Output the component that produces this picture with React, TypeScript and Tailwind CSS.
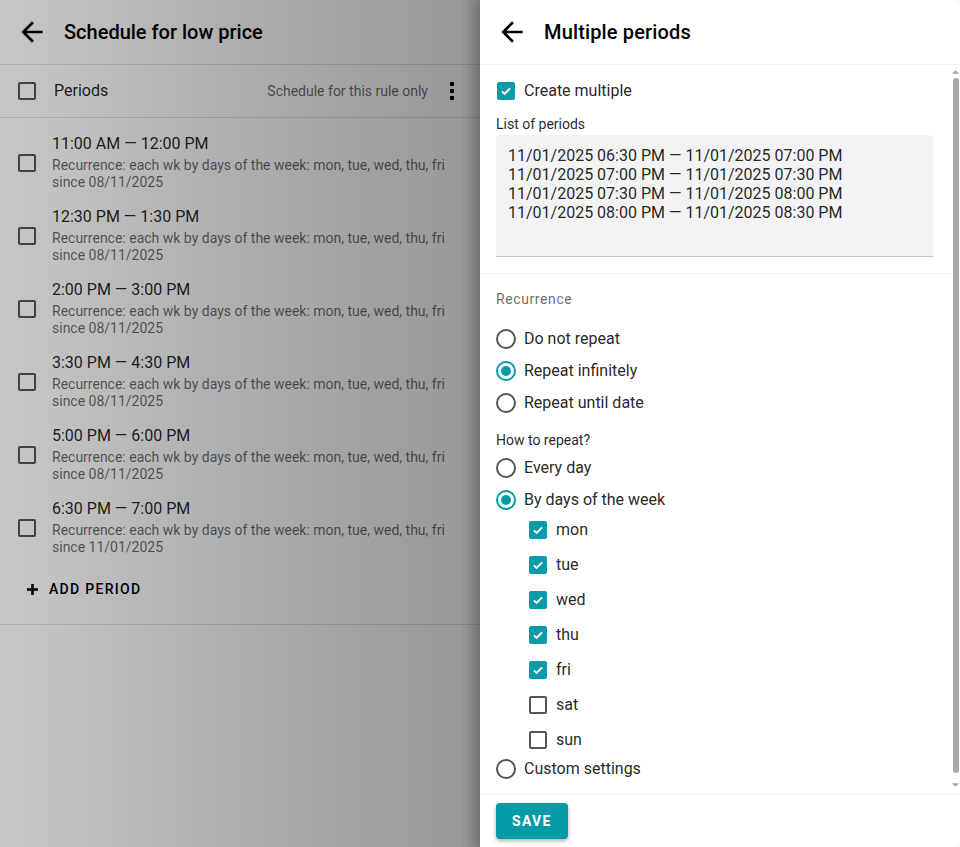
import React from "react";

const periods = [
  { time: "11:00 AM — 12:00 PM", since: "08/11/2025" },
  { time: "12:30 PM — 1:30 PM", since: "08/11/2025" },
  { time: "2:00 PM — 3:00 PM", since: "08/11/2025" },
  { time: "3:30 PM — 4:30 PM", since: "08/11/2025" },
  { time: "5:00 PM — 6:00 PM", since: "08/11/2025" },
  { time: "6:30 PM — 7:00 PM", since: "11/01/2025" },
];

const listLines = [
  "11/01/2025 06:30 PM — 11/01/2025 07:00 PM",
  "11/01/2025 07:00 PM — 11/01/2025 07:30 PM",
  "11/01/2025 07:30 PM — 11/01/2025 08:00 PM",
  "11/01/2025 08:00 PM — 11/01/2025 08:30 PM",
];

const days = [
  { d: "mon", on: true },
  { d: "tue", on: true },
  { d: "wed", on: true },
  { d: "thu", on: true },
  { d: "fri", on: true },
  { d: "sat", on: false },
  { d: "sun", on: false },
];

function BackArrow() {
  return (
    <svg viewBox="0 0 24 24" className="w-[32px] h-[32px] shrink-0" fill="#000">
      <path d="M20 11H7.83l5.59-5.59L12 4l-8 8 8 8 1.41-1.41L7.83 13H20v-2z" />
    </svg>
  );
}

function Check({ on }: { on: boolean }) {
  if (on) {
    return (
      <span className="w-[18px] h-[18px] rounded-[2px] bg-[#079ba7] flex items-center justify-center shrink-0">
        <svg viewBox="0 0 24 24" className="w-[14px] h-[14px]" fill="none" stroke="#fff" strokeWidth="3.2">
          <path d="M5 12.5l4.5 4.5L19 7.5" />
        </svg>
      </span>
    );
  }
  return <span className="block w-[18px] h-[18px] rounded-[2px] border-2 border-[#555555] shrink-0" />;
}

function Radio({ on }: { on: boolean }) {
  return (
    <span
      className={
        on
          ? "w-[20px] h-[20px] rounded-full border-2 border-[#079ba7] flex items-center justify-center shrink-0"
          : "w-[20px] h-[20px] rounded-full border-2 border-[#555555] shrink-0"
      }
    >
      {on && <span className="w-[10px] h-[10px] rounded-full bg-[#079ba7]" />}
    </span>
  );
}

function RadioRow({ label, on }: { label: string; on?: boolean }) {
  return (
    <div className="h-[32px] flex items-center gap-[8px]">
      <Radio on={!!on} />
      <span className="text-[16px] text-black/87">{label}</span>
    </div>
  );
}

export default function App() {
  return (
    <div className="w-[960px] h-[847px] flex overflow-hidden bg-white font-['Roboto',sans-serif] text-black/87">
      {/* page behind the drawer */}
      <div className="relative w-[480px] h-full shrink-0 bg-white">
        <div className="h-[65px] flex items-center gap-[16px] pl-[16px] border-b border-[#e0e0e0]">
          <BackArrow />
          <h1 className="text-[20px] font-medium text-black">Schedule for low price</h1>
        </div>
        <div className="h-[53px] flex items-center pl-[18px] pr-[24px] border-b border-[#e0e0e0]">
          <Check on={false} />
          <span className="ml-[18px] text-[16px]">Periods</span>
          <span className="ml-auto text-[14px] text-black/60">Schedule for this rule only</span>
          <svg viewBox="0 0 8 24" className="ml-[20px] w-[8px] h-[24px]" fill="#000">
            <rect x="2" y="3" width="4" height="4" rx="0.8" />
            <rect x="2" y="10" width="4" height="4" rx="0.8" />
            <rect x="2" y="17" width="4" height="4" rx="0.8" />
          </svg>
        </div>
        <div className="pt-[7px]">
          {periods.map((p) => (
            <div key={p.time} className="h-[73px] flex items-center pl-[18px]">
              <span className="mt-[3px] shrink-0">
                <Check on={false} />
              </span>
              <div className="ml-[16px] flex flex-col">
                <span className="text-[16px] leading-[22px]">{p.time}</span>
                <span className="mt-[2px] text-[14px] leading-[17px] text-black/60">
                  Recurrence: each wk by days of the week: mon, tue, wed, thu, fri
                </span>
                <span className="text-[14px] leading-[17px] text-black/60">since {p.since}</span>
              </div>
            </div>
          ))}
        </div>
        <div className="pt-[8px] pb-[17px] pl-[27px] border-b border-[#e0e0e0]">
          <div className="h-[36px] flex items-center gap-[11px]">
            <svg viewBox="0 0 12 12" className="w-[11px] h-[11px]" fill="#000">
              <rect x="4.6" y="0" width="2.8" height="12" />
              <rect x="0" y="4.6" width="12" height="2.8" />
            </svg>
            <span className="text-[14px] font-medium tracking-[1.3px] text-black">ADD PERIOD</span>
          </div>
        </div>
        {/* scrim */}
        <div className="absolute inset-0 bg-[linear-gradient(90deg,rgba(0,0,0,0.22)_0%,rgba(0,0,0,0.31)_45%,rgba(0,0,0,0.4)_96%,rgba(0,0,0,0.47)_100%)]" />
      </div>

      {/* drawer */}
      <div className="relative w-[480px] h-full flex flex-col bg-white rounded-r-[8px] shadow-[-6px_0_14px_rgba(0,0,0,0.18)]">
        <div className="h-[65px] shrink-0 flex items-center gap-[16px] pl-[16px] border-b border-[#eeeeee]">
          <BackArrow />
          <h2 className="text-[20px] font-medium text-black tracking-[0.15px]">Multiple periods</h2>
        </div>

        <div className="flex-1 flex min-h-0">
          <div className="flex-1 flex flex-col">
            <div className="pl-[16px] pr-[18px] pt-[14px] pb-[16px] border-b border-[#eeeeee]">
              <div className="h-[24px] flex items-center gap-[9px] pl-[1px]">
                <Check on />
                <span className="text-[16px]">Create multiple</span>
              </div>
              <div className="mt-[11px] text-[14px] leading-[20px]">List of periods</div>
              <div className="mt-[1px] h-[122px] rounded-t-[4px] bg-[#f3f3f3] border-b border-[#c4c4c4] pl-[12px] pt-[11px] text-[16px] leading-[19px] whitespace-pre">
                {listLines.join("\n")}
              </div>
            </div>

            <div className="pl-[16px] pt-[15px]">
              <div className="text-[14px] leading-[20px] tracking-[0.6px] text-black/60">Recurrence</div>
              <div className="mt-[14px]">
                <RadioRow label="Do not repeat" />
                <RadioRow label="Repeat infinitely" on />
                <RadioRow label="Repeat until date" />
              </div>
              <div className="mt-[11px] text-[14px] leading-[20px]">How to repeat?</div>
              <div className="mt-[2px]">
                <RadioRow label="Every day" />
                <RadioRow label="By days of the week" on />
              </div>
              <div className="-mt-[4px] pl-[33px]">
                {days.map((d) => (
                  <div key={d.d} className="h-[35px] flex items-center gap-[9px]">
                    <Check on={d.on} />
                    <span className="text-[16px]">{d.d}</span>
                  </div>
                ))}
              </div>
              <div className="-mt-[4px]">
                <RadioRow label="Custom settings" />
              </div>
            </div>
          </div>

          {/* scrollbar */}
          <div className="w-[9px] shrink-0 flex flex-col items-center pt-[5px] pb-[5px]">
            <svg viewBox="0 0 8 4" className="w-[7px] h-[4px]" fill="#a3a3a3">
              <path d="M0 4L4 0l4 4z" />
            </svg>
            <div className="mt-[4px] w-[6px] h-[695px] rounded-[3px] bg-[#a8a8a8]" />
            <div className="flex-1" />
            <svg viewBox="0 0 8 4" className="w-[7px] h-[4px] mb-[2px]" fill="#a3a3a3">
              <path d="M0 0l4 4 4-4z" />
            </svg>
          </div>
        </div>

        <div className="h-[53px] shrink-0 border-t border-[#eeeeee] pl-[16px] pt-[8px]">
          <button className="h-[36px] px-[16px] rounded-[4px] bg-[#079ba7] text-white text-[14px] font-bold tracking-[1.3px] shadow-[0_2px_4px_rgba(0,0,0,0.3)]">
            SAVE
          </button>
        </div>
      </div>
    </div>
  );
}
